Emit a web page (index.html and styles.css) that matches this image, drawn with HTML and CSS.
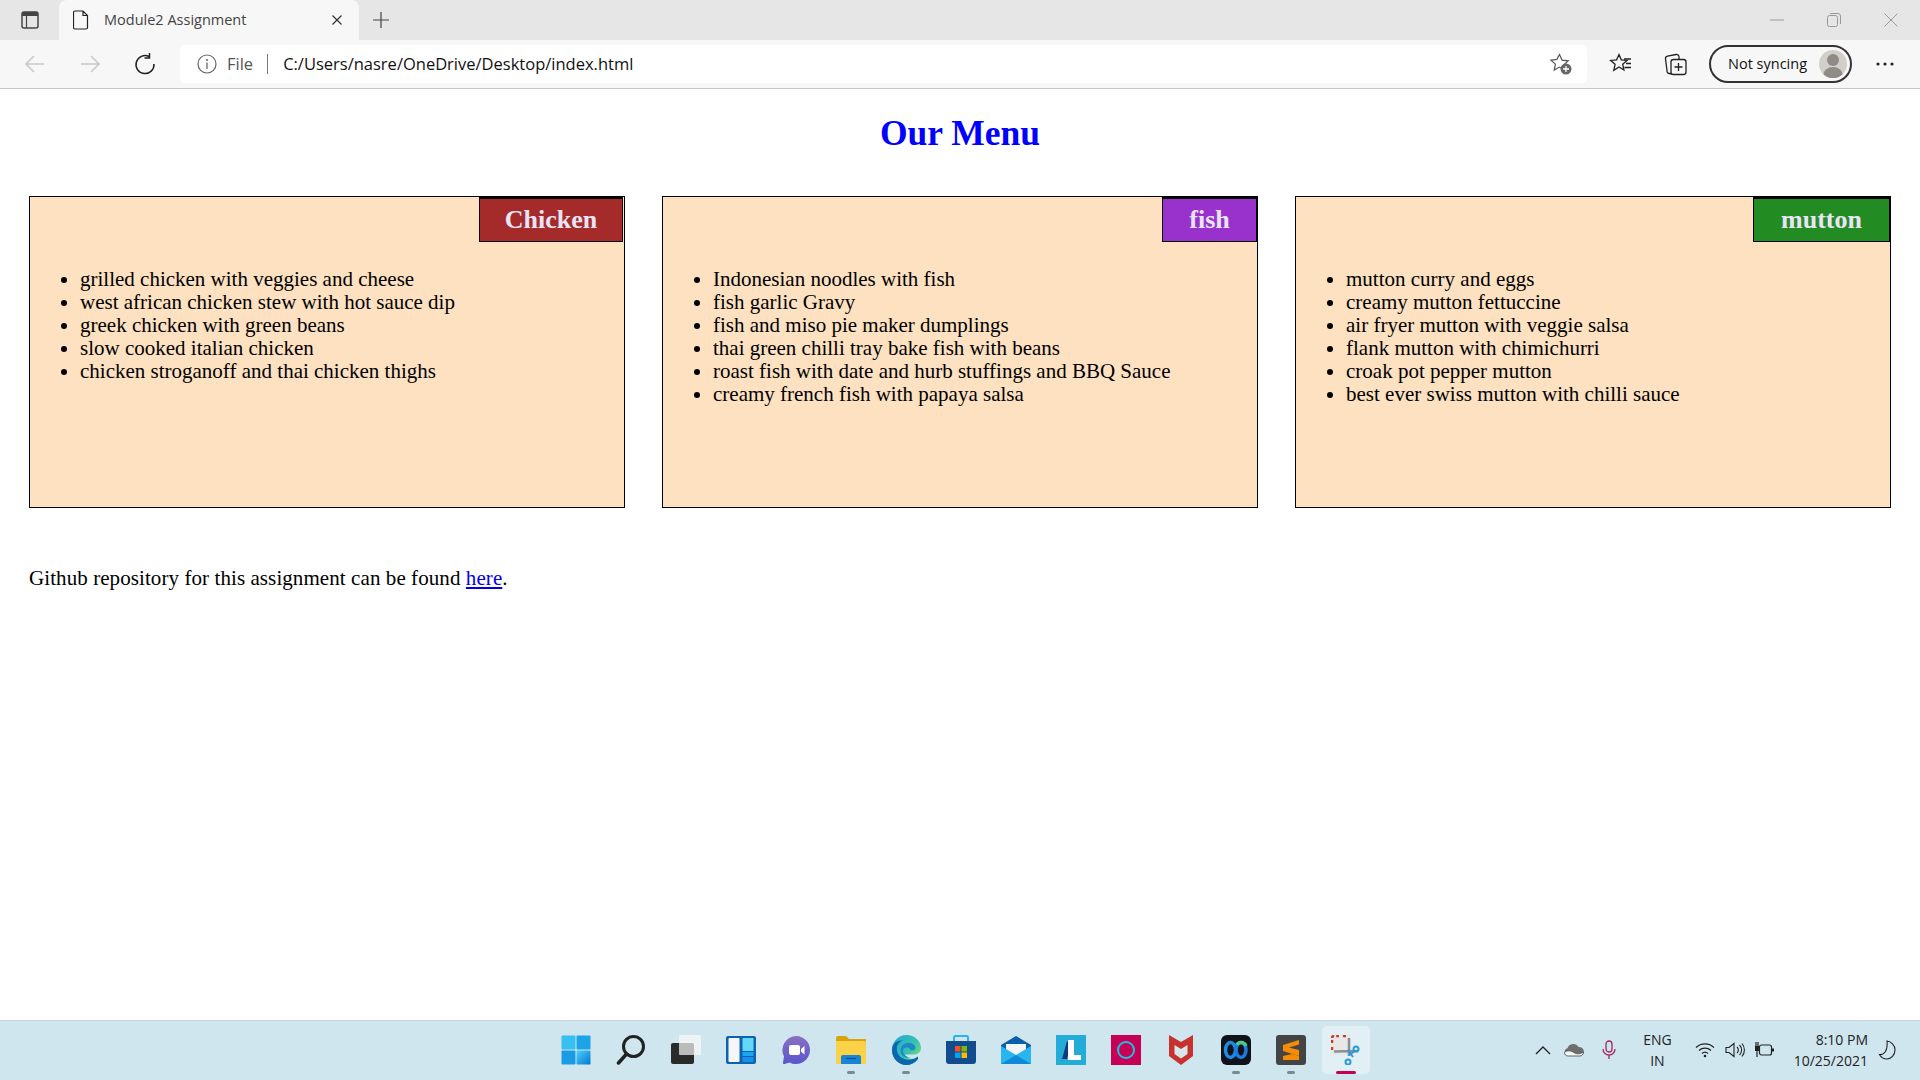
FILE: index.html
```html
<!DOCTYPE html>
<html>
<head>
	<title>Module2 Assignment</title>
	<link rel="stylesheet" href="styles.css">
</head>
<body>
	<div class="tabstrip">
		<svg class="tab-actions" width="20" height="20" viewBox="0 0 20 20"><rect x="2" y="2" width="16" height="16" rx="2" fill="none" stroke="#444" stroke-width="1.500"/><path d="M2 4a2 2 0 0 1 2-2h12a2 2 0 0 1 2 2v2H2z" fill="#444"/><path d="M6.500 6v12" stroke="#444" stroke-width="1.200"/></svg>
		<div class="tab">
			<svg width="16" height="20" viewBox="0 0 16 20"><path d="M2 1h8l4.500 4.500V17.500A1.500 1.500 0 0 1 13 19H2a1.500 1.500 0 0 1-1.500-1.500V2.500A1.500 1.500 0 0 1 2 1zM10 1v4.500h4.500" fill="none" stroke="#222" stroke-width="1.200"/></svg>
			<span class="tab-title">Module2 Assignment</span>
			<svg class="tab-close" width="12" height="12" viewBox="0 0 12 12"><path d="M1.500 1.500l9 9M10.500 1.500l-9 9" stroke="#333" stroke-width="1.200"/></svg>
		</div>
		<svg class="tab-new" width="18" height="18" viewBox="0 0 18 18"><path d="M9 1v16M1 9h16" stroke="#444" stroke-width="1.200"/></svg>
		<div class="win-controls">
			<svg width="14" height="14" viewBox="0 0 14 14"><path d="M0 7h14" stroke="#999"/></svg>
			<svg width="14" height="14" viewBox="0 0 14 14"><rect x="0.500" y="2.500" width="10" height="11" rx="2" fill="none" stroke="#999"/><path d="M3 0.500h8a2.500 2.500 0 0 1 2.500 2.500V11" fill="none" stroke="#999"/></svg>
			<svg width="14" height="14" viewBox="0 0 14 14"><path d="M0.500 0.500l13 13M13.500 0.500l-13 13" stroke="#999"/></svg>
		</div>
	</div>

	<div class="toolbar">
		<svg class="nav-icon" width="22" height="22" viewBox="0 0 22 22"><path d="M20 11H2M10 3l-8 8 8 8" fill="none" stroke="#c8c8c8" stroke-width="1.500"/></svg>
		<svg class="nav-icon" width="22" height="22" viewBox="0 0 22 22"><path d="M2 11h18M12 3l8 8-8 8" fill="none" stroke="#c8c8c8" stroke-width="1.500"/></svg>
		<svg class="nav-icon" width="22" height="22" viewBox="0 0 22 22"><path d="M15 3.500A9 9 0 1 0 20 11M15.500 0v5h-5" fill="none" stroke="#222" stroke-width="1.500"/></svg>
		<div class="address">
			<svg width="20" height="20" viewBox="0 0 20 20"><circle cx="10" cy="10" r="9" fill="none" stroke="#666" stroke-width="1.200"/><path d="M10 8.500V15" stroke="#666" stroke-width="1.300"/><circle cx="10" cy="6" r="1" fill="#666"/></svg>
			<span class="file-label">File</span>
			<span class="addr-sep"></span>
			<span class="url">C:/Users/nasre/OneDrive/Desktop/index.html</span>
			<svg class="addr-star" width="24" height="24" viewBox="0 0 24 24"><path d="M10.500 2.500l2.600 5.600 6.100.7-4.500 4.200 1.100 5.100-5.300-3-5.300 3 1.200-6-4.500-4 6-.7z" fill="none" stroke="#555" stroke-width="1.200"/><circle cx="17" cy="17" r="5.500" fill="#666"/><path d="M17 14v6M14 17h6" stroke="#fff" stroke-width="1.300"/></svg>
		</div>
		<svg class="tool-icon" width="24" height="24" viewBox="0 0 24 24"><path d="M10 2.500l2.300 5.300 5.700.6-4.300 3.800 1.200 5.800-4.900-3-5.200 3.300 1.300-6-4.500-3.900 6-.6z" fill="none" stroke="#222" stroke-width="1.300"/><path d="M15 7h7M17 11.500h5M15.500 15.500h6.500" stroke="#222" stroke-width="1.300"/></svg>
		<svg class="tool-icon" width="24" height="24" viewBox="0 0 24 24"><path d="M8 22l-3-.5a2.500 2.500 0 0 1-2-3L1.500 7A2.500 2.500 0 0 1 3.500 4.200L12 2.500a2.500 2.500 0 0 1 3 2V7" fill="none" stroke="#222" stroke-width="1.300"/><rect x="7" y="7.500" width="15" height="15" rx="2.500" fill="#f7f7f7" stroke="#222" stroke-width="1.300"/><path d="M14.500 11v8M10.500 15h8" stroke="#222" stroke-width="1.300"/></svg>
		<div class="profile">
			<span>Not syncing</span>
			<svg width="28" height="28" viewBox="0 0 28 28"><circle cx="14" cy="14" r="14" fill="#d2cfca"/><circle cx="14" cy="10" r="6" fill="#8f8b86"/><path d="M4.500 24.500a9.500 7.500 0 0 1 19 0A14 14 0 0 1 4.500 24.500z" fill="#8f8b86"/></svg>
		</div>
		<svg class="more" width="18" height="4" viewBox="0 0 18 4"><circle cx="2" cy="2" r="1.600" fill="#222"/><circle cx="9" cy="2" r="1.600" fill="#222"/><circle cx="16" cy="2" r="1.600" fill="#222"/></svg>
	</div>

	<main class="page">
		<h1 class="menu-title">Our Menu</h1>
		<div class="menu-grid">
			<section class="menu-card">
				<h2 class="tag tag-chicken">Chicken</h2>
				<ul>
					<li>grilled chicken with veggies and cheese</li>
					<li>west african chicken stew with hot sauce dip</li>
					<li>greek chicken with green beans</li>
					<li>slow cooked italian chicken</li>
					<li>chicken stroganoff and thai chicken thighs</li>
				</ul>
			</section>
			<section class="menu-card">
				<h2 class="tag tag-fish">fish</h2>
				<ul>
					<li>Indonesian noodles with fish</li>
					<li>fish garlic Gravy</li>
					<li>fish and miso pie maker dumplings</li>
					<li>thai green chilli tray bake fish with beans</li>
					<li>roast fish with date and hurb stuffings and BBQ Sauce</li>
					<li>creamy french fish with papaya salsa</li>
				</ul>
			</section>
			<section class="menu-card">
				<h2 class="tag tag-mutton">mutton</h2>
				<ul>
					<li>mutton curry and eggs</li>
					<li>creamy mutton fettuccine</li>
					<li>air fryer mutton with veggie salsa</li>
					<li>flank mutton with chimichurri</li>
					<li>croak pot pepper mutton</li>
					<li>best ever swiss mutton with chilli sauce</li>
				</ul>
			</section>
		</div>
		<p class="repo-note">Github repository for this assignment can be found <a href="#">here</a>.</p>
	</main>

	<footer class="taskbar">
		<div class="task-spacer"></div>
		<div class="task-icons">
			<div class="task-item"><svg width="30" height="30" viewBox="0 0 30 30"><defs><linearGradient id="winblue" x1="0" y1="0" x2="1" y2="1"><stop offset="0" stop-color="#4fd0f8"/><stop offset="1" stop-color="#0078d4"/></linearGradient></defs><rect x="0.500" y="0.500" width="14" height="14" rx="1" fill="#38c0f2"/><rect x="15.500" y="0.500" width="14" height="14" rx="1" fill="#1ea3e8"/><rect x="0.500" y="15.500" width="14" height="14" rx="1" fill="#1a9be4"/><rect x="15.500" y="15.500" width="14" height="14" rx="1" fill="url(#winblue)"/></svg></div>
			<div class="task-item"><svg width="30" height="30" viewBox="0 0 30 30"><circle cx="17.500" cy="11.500" r="10" fill="none" stroke="#222" stroke-width="3"/><path d="M10.500 19L2.500 28" stroke="#222" stroke-width="3.500" stroke-linecap="round"/></svg></div>
			<div class="task-item"><svg width="30" height="30" viewBox="0 0 30 30"><rect x="0" y="8" width="23" height="21" rx="2" fill="#2a2a2a"/><rect x="8" y="0" width="22" height="20" rx="1" fill="#fafafa" fill-opacity="0.700"/></svg></div>
			<div class="task-item"><svg width="30" height="30" viewBox="0 0 30 30"><rect width="30" height="28" y="1" rx="2" fill="#0f62b0"/><rect x="2.500" y="3" width="11" height="24" rx="1" fill="#f4f6f8"/><rect x="16.500" y="3" width="11" height="13" fill="#63d8fb"/><rect x="16.500" y="17" width="11" height="4" fill="#1aa7ef"/><rect x="16.500" y="22" width="11" height="5" fill="#1591e6"/></svg></div>
			<div class="task-item"><svg width="30" height="30" viewBox="0 0 30 30"><defs><linearGradient id="chat" x1="0" y1="0" x2="0" y2="1"><stop offset="0" stop-color="#8a6fc4"/><stop offset="1" stop-color="#5a55cc"/></linearGradient></defs><path d="M15 1a14 14 0 1 1-6.500 26.400L3.500 29c-1 .3-1.800-.6-1.500-1.500L3 21.500A14 14 0 0 1 15 1z" fill="url(#chat)"/><rect x="8" y="10" width="11" height="10" rx="2" fill="#fff"/><path d="M20 14l3.500-3v8.500L20 16.500z" fill="#fff"/></svg></div>
			<div class="task-item"><svg width="30" height="30" viewBox="0 0 30 30"><path d="M0 3a2 2 0 0 1 2-2h8l3 3h17v4H0z" fill="#d8a40e"/><path d="M0 6h28a2 2 0 0 1 2 2v20a1 1 0 0 1-1 1H1a1 1 0 0 1-1-1z" fill="#fbd147"/><path d="M5 29v-7a2 2 0 0 1 2-2h16a2 2 0 0 1 2 2v7z" fill="#1784d6"/><path d="M10 23.500h10" stroke="#0c4e8c" stroke-width="1.200"/></svg></div>
			<div class="task-item"><svg width="30" height="30" viewBox="0 0 30 30"><defs><linearGradient id="edge" x1="0" y1="0" x2="1" y2="0.800"><stop offset="0" stop-color="#1fa8d8"/><stop offset="0.600" stop-color="#35c1b0"/><stop offset="1" stop-color="#7ee06a"/></linearGradient></defs><path d="M1 15C1 7 7 0 15.500 0 23.500 0 30 6 30 13c0 4-3 6.500-7 6.500h-9c1 4 7 5.500 12 3.500l1 .5C24 28 19.500 30 15.500 30 7 30 1 23 1 15z" fill="url(#edge)"/><path d="M1 15C1 8 6.500 5 12 5.500 7 7 5 11 6 16c1 5.500 7 9.500 13.500 8.500 3-.5 5.500-1.500 7.500-3v2.500C24 28 19.500 30 15.500 30 7 30 1 23 1 15z" fill="#0a66ae"/><path d="M9.500 15.500c0-4.500 3.500-7.500 8-7.500 4 0 7 2 7 5 0 1.500-1.500 2.500-4 2.500h-1c0-1.500-1-3-3.500-3-2.500 0-4 1.500-4 3 0 3.500 3 6.500 7 7-5.500 1-9.500-2.500-9.500-7z" fill="#1c8ac8"/></svg></div>
			<div class="task-item"><svg width="30" height="30" viewBox="0 0 30 30"><path d="M8 6V2.500A1.500 1.500 0 0 1 9.500 1h11A1.500 1.500 0 0 1 22 2.500V6" fill="none" stroke="#2ab4ee" stroke-width="2"/><path d="M0 6h30v20a3 3 0 0 1-3 3H3a3 3 0 0 1-3-3z" fill="#104c8e"/><rect x="9" y="11" width="5.500" height="5.500" fill="#f25022"/><rect x="15.500" y="11" width="5.500" height="5.500" fill="#7fba00"/><rect x="9" y="17.500" width="5.500" height="5.500" fill="#00a4ef"/><rect x="15.500" y="17.500" width="5.500" height="5.500" fill="#ffb900"/></svg></div>
			<div class="task-item"><svg width="30" height="30" viewBox="0 0 30 30"><path d="M15 1L30 10v19H0V10z" fill="#0a5eae"/><path d="M5 9h20v9l-10 5L5 18z" fill="#f2f4f6"/><path d="M0 11l15 9 15-9v18H0z" fill="#29b5ee"/><path d="M0 29l15-9 15 9z" fill="#0f8ad8"/></svg></div>
			<div class="task-item"><svg width="30" height="30" viewBox="0 0 30 30"><rect width="30" height="30" fill="#23acd8"/><path d="M11 6l-5 18h5l4-15z" fill="#0e3a7a"/><path d="M12 5h6v15h7v5H12z" fill="#fff"/></svg></div>
			<div class="task-item"><svg width="30" height="30" viewBox="0 0 30 30"><rect width="30" height="30" fill="#c50056"/><circle cx="15" cy="15" r="8" fill="none" stroke="#1fc0de" stroke-width="2"/></svg></div>
			<div class="task-item"><svg width="30" height="30" viewBox="0 0 30 30"><path d="M3 0l12 7 12-7v21L15 30 3 21z" fill="#c8322e"/><path d="M8.500 10l6.500 4 6.500-4v9L15 23.500 8.500 19z" fill="#d6e8ec"/></svg></div>
			<div class="task-item"><svg width="30" height="30" viewBox="0 0 30 30"><rect width="30" height="30" rx="6" fill="#10141a"/><ellipse cx="9.500" cy="15" rx="5" ry="7.500" fill="none" stroke="#1b8ce8" stroke-width="3.500"/><ellipse cx="20" cy="15" rx="5" ry="7.500" fill="none" stroke="#1b7ce0" stroke-width="3.500"/><path d="M16 10c1-3 7-4 9 1" fill="none" stroke="#4cc884" stroke-width="3.500"/></svg></div>
			<div class="task-item"><svg width="30" height="30" viewBox="0 0 30 30"><rect width="30" height="30" rx="3" fill="#444"/><path d="M23 5L7 10v6l16 5v-6L13 12.500 23 9.500z" fill="#f48c06"/><path d="M7 16l16 5v4L7 25v-4l9-2z" fill="#f48c06"/></svg></div>
			<div class="task-item task-active"><svg width="30" height="30" viewBox="0 0 30 30"><rect x="0" y="0" width="20" height="20" rx="3" fill="#e6e8e8"/><path d="M1 8V3a2 2 0 0 1 2-2h5M12 1h3M1 12v3" fill="none" stroke="#d63a1e" stroke-width="2.500" stroke-dasharray="3 2"/><path d="M18 3v18M3 16.500l24-.5" stroke="#8a8f94" stroke-width="2.500"/><path d="M17 15l5 7" stroke="#2a9bd8" stroke-width="2"/><path d="M18 20l6-4" stroke="#2a9bd8" stroke-width="2"/><circle cx="25" cy="14" r="2.500" fill="none" stroke="#2a9bd8" stroke-width="2"/><circle cx="17" cy="27" r="2.500" fill="none" stroke="#2a9bd8" stroke-width="2"/></svg></div>
		</div>
		<div class="tray">
			<svg width="16" height="10" viewBox="0 0 16 10"><path d="M1 9l7-7 7 7" fill="none" stroke="#222" stroke-width="1.300"/></svg>
			<svg class="tray-cloud" width="22" height="14" viewBox="0 0 22 14"><path d="M5 13a4 4 0 0 1-.500-7.800A6 6 0 0 1 15.500 4 4.500 4.500 0 0 1 17 13z" fill="#6e6e6e"/><path d="M1.500 9.500C4 7 8 7.500 11 9.500s6 1.500 9.500-.5c0 2-1.500 4-3.500 4H5c-2 0-3.500-1.500-3.500-3.500z" fill="#f4f6f6" stroke="#444" stroke-width="0.800"/></svg>
			<svg class="tray-mic" width="14" height="20" viewBox="0 0 14 20"><rect x="4" y="1" width="6" height="11" rx="3" fill="none" stroke="#a32a5c" stroke-width="1.300"/><path d="M1 9a6 6 0 0 0 12 0M7 15v4" fill="none" stroke="#a32a5c" stroke-width="1.300"/></svg>
			<div class="lang">ENG<br>IN</div>
			<svg width="20" height="16" viewBox="0 0 20 16"><path d="M1 5.500a13 13 0 0 1 18 0M4 8.500a9 9 0 0 1 12 0M7 11.500a4.500 4.500 0 0 1 6 0" fill="none" stroke="#222" stroke-width="1.200"/><circle cx="10" cy="14" r="1.300" fill="#222"/></svg>
			<svg width="20" height="16" viewBox="0 0 20 16"><path d="M1 5.500h3L9 1.500v13l-5-4H1z" fill="none" stroke="#222" stroke-width="1.100"/><path d="M12 5a4 4 0 0 1 0 6M14.500 3a7 7 0 0 1 0 10M17 1.500a10 10 0 0 1 0 13" fill="none" stroke="#222" stroke-width="1.100"/></svg>
			<svg class="tray-power" width="22" height="16" viewBox="0 0 22 16"><rect x="6.500" y="3" width="12" height="10" rx="2" fill="none" stroke="#222" stroke-width="1.200"/><path d="M19 6.500h2v3h-2z" fill="#222"/><path d="M2 4h4v5H2z" fill="#222"/><path d="M3 0v4M5 0v4M4 9v6" stroke="#222" stroke-width="1.200"/></svg>
			<div class="clock">8:10 PM<br>10/25/2021</div>
			<svg width="18" height="20" viewBox="0 0 18 20"><path d="M9 1c4 .5 8 4 8 9 0 5-4 9-8 9-3 0-6-1.500-7.500-4.500C6 15 10 11 9 1z" fill="none" stroke="#222" stroke-width="1.100"/></svg>
		</div>
	</footer>
</body>
</html>
```

FILE: styles.css
```css
html, body {
	height: 100%;
}
body {
	margin: 0;
	display: flex;
	flex-direction: column;
	height: 1080px;
	overflow: hidden;
	background-color: #fff;
	font-family: "Liberation Serif", serif;
	color: #000;
}
svg {
	display: block;
	flex: none;
}

/* browser chrome */
.tabstrip {
	height: 40px;
	background-color: #e6e6e6;
	display: flex;
	align-items: center;
	padding-left: 20px;
	flex: none;
}
.tab-actions {
	margin-right: 19px;
}
.tab {
	align-self: flex-end;
	width: 300px;
	height: 40px;
	box-sizing: border-box;
	background-color: #f7f7f7;
	border-radius: 8px 8px 0 0;
	display: flex;
	align-items: center;
	padding: 0 16px 0 14px;
}
.tab-title {
	font-family: "Open Sans", sans-serif;
	font-size: 14.500px;
	color: #444;
	margin-left: 15px;
	padding-bottom: 2px;
	flex: 1;
}
.tab-new {
	margin-left: 13px;
}
.win-controls {
	margin-left: auto;
	display: flex;
	gap: 43px;
	padding-right: 22px;
}
.toolbar {
	height: 49px;
	box-sizing: border-box;
	background-color: #f7f7f7;
	border-bottom: 1px solid #c4c4c4;
	display: flex;
	align-items: center;
	padding-left: 24px;
	flex: none;
}
.nav-icon {
	margin-right: 33px;
}
.address {
	margin-left: -9px;
	width: 1407px;
	height: 38px;
	box-sizing: border-box;
	background-color: #fff;
	border-radius: 6px;
	display: flex;
	align-items: center;
	padding: 0 14px 0 17px;
	font-family: "Open Sans", sans-serif;
}
.file-label {
	font-size: 16.500px;
	color: #555;
	margin-left: 10px;
	padding-bottom: 2px;
}
.addr-sep {
	width: 1px;
	height: 20px;
	background-color: #777;
	margin: 0 15px 0 14px;
}
.url {
	font-size: 16.500px;
	color: #111;
	padding-bottom: 2px;
	flex: 1;
}
.tool-icon {
	margin-left: 22px;
}
.tool-icon + .tool-icon {
	margin-left: 31px;
}
.profile {
	margin-left: 21px;
	width: 143px;
	height: 38px;
	box-sizing: border-box;
	border: 2px solid #333;
	border-radius: 19px;
	display: flex;
	align-items: center;
	justify-content: space-between;
	padding: 0 3px 0 17px;
	font-family: "Open Sans", sans-serif;
	font-size: 14.500px;
	color: #111;
}
.profile span {
	padding-bottom: 2px;
}
.more {
	margin-left: 24px;
}

/* page */
.page {
	flex: 1;
	padding: 0 29px;
}
.menu-title {
	margin: 26px 0 45px;
	text-align: center;
	color: #0000ff;
	font-size: 35.500px;
	line-height: 36px;
	font-weight: bold;
}
.menu-grid {
	display: grid;
	grid-template-columns: repeat(3, 1fr);
	gap: 37px;
}
.menu-card {
	height: 312px;
	box-sizing: border-box;
	border: 1px solid #000;
	background-color: #fde1c0;
	display: flex;
	flex-direction: column;
	font-size: 21px;
	line-height: 23px;
}
.tag {
	align-self: flex-end;
	margin: 0;
	height: 45px;
	box-sizing: border-box;
	border: 1px solid #000;
	border-top-width: 2px;
	text-align: center;
	color: #e9e4f5;
	font-size: 26px;
	line-height: 42px;
	font-weight: bold;
}
.tag-chicken {
	width: 144px;
	margin-right: 1px;
	background-color: #a52a2a;
}
.tag-fish {
	width: 95px;
	background-color: #9932cc;
}
.tag-mutton {
	width: 137px;
	background-color: #228b22;
}
.menu-card ul {
	margin: 26px 0 0;
	padding-left: 50px;
}
.repo-note {
	margin: 59px 0 0;
	font-size: 21px;
	line-height: 23px;
	letter-spacing: 0.080px;
}

/* taskbar */
.taskbar {
	height: 60px;
	flex: none;
	background-color: #cfe6ee;
	border-top: 1px solid #c0d6de;
	box-sizing: border-box;
	display: grid;
	grid-template-columns: 1fr auto 1fr;
	align-items: center;
	padding-bottom: 1px;
}
.task-icons {
	display: flex;
	gap: 7px;
	margin-left: 1px;
}
.task-item {
	position: relative;
	width: 48px;
	height: 48px;
	display: flex;
	align-items: center;
	justify-content: center;
}
.task-active {
	background-color: #e2f0f6;
	border-radius: 5px;
}
.task-item:nth-child(6)::after,
.task-item:nth-child(7)::after,
.task-item:nth-child(13)::after,
.task-item:nth-child(14)::after,
.task-active::after {
	content: "";
	position: absolute;
	left: 50%;
	bottom: 0;
	width: 8px;
	height: 3px;
	margin-left: -4px;
	border-radius: 2px;
	background-color: #7a8a90;
}
.task-active::after {
	width: 20px;
	margin-left: -10px;
	background-color: #c50056;
}
.tray {
	justify-self: end;
	display: flex;
	align-items: center;
	font-family: "Open Sans", sans-serif;
	font-size: 14px;
	color: #222;
	padding-right: 24px;
	gap: 10px;
}
.tray-cloud {
	margin-left: 2px;
}
.tray-mic {
	margin-left: 7px;
}
.tray-power {
	margin-left: -2px;
}
.lang {
	text-align: center;
	line-height: 21px;
	margin: 0 13px 0 17px;
}
.clock {
	text-align: right;
	line-height: 21px;
	margin-left: 9px;
}
```
